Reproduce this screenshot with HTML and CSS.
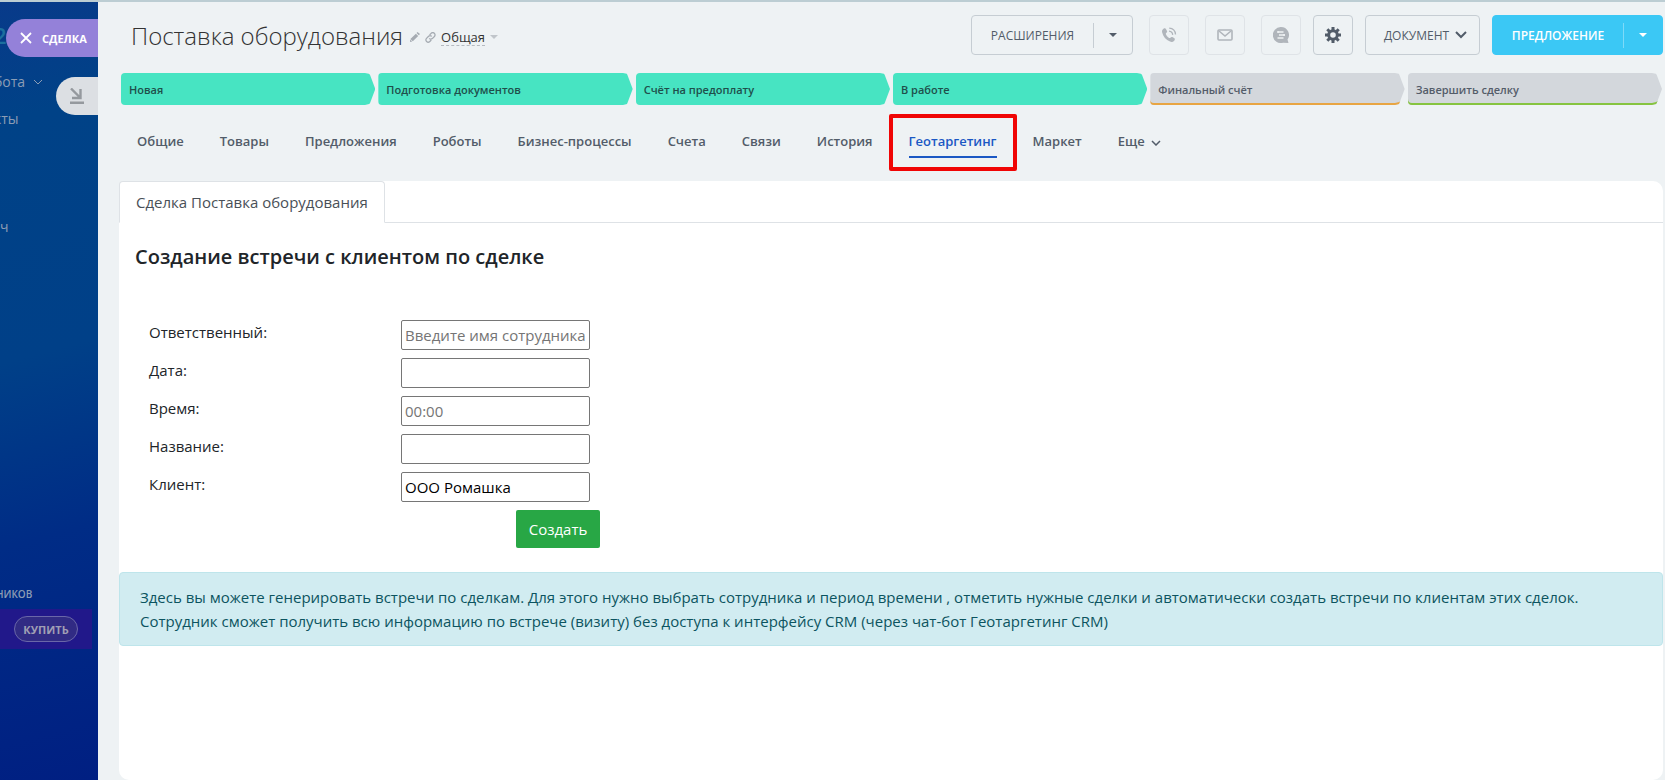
FILE: index.html
```html
<!DOCTYPE html>
<html lang="ru">
<head>
    <meta charset="UTF-8">
    <meta name="viewport" content="width=device-width, initial-scale=1.0">
    <title>Поставка оборудования</title>
    <link rel="stylesheet" href="styles.css">
</head>
<body>
    <aside class="sidebar">
        <div class="logo">24</div>
        <a href="#" class="menu-item">бота
            <svg width="10" height="6" viewBox="0 0 10 6" fill="none" stroke="currentColor"><path d="M1 1l4 4 4-4"/></svg>
        </a>
        <a href="#" class="menu-item">кты</a>
        <a href="#" class="menu-item menu-key">ч</a>
        <div class="promo-title">НИКОВ</div>
        <div class="promo"><button class="buy">КУПИТЬ</button></div>

        <button class="slider-label label-deal">
            <svg width="12" height="12" viewBox="0 0 12 12" fill="none" stroke="#fff" stroke-width="1.800"><path d="M1 1l10 10M11 1L1 11"/></svg>
            СДЕЛКА
        </button>
        <button class="slider-label label-collapse" aria-label="Свернуть">
            <svg width="14" height="16" viewBox="0 0 14 16" fill="none" stroke="#95999e" stroke-width="2.400"><path d="M1 .500l9 9M10.500 1v9H2M0 14.800h14"/></svg>
        </button>
    </aside>

    <main class="page">
        <header class="header">
            <h1>Поставка оборудования</h1>
            <div class="title-tools">
                <svg width="10" height="10" viewBox="0 0 10 10" fill="#a5abb2"><path d="M7.500 0L10 2 8.800 3.300 6.500 1.100zM5.900 1.700l2.300 2.200L2.800 9.200.400 7zM.200 7.600L2.200 9.600 0 10z"/></svg>
                <svg width="11" height="11" viewBox="0 0 11 11" fill="none" stroke="#a5abb2" stroke-width="1.300"><path d="M4.600 3l1.500-1.600c1-1 2.300-.9 3.200-.1s1 2.200.1 3.200L7.300 6.600c-.9.800-2.200.8-3-.2M6.300 8L4.800 9.500c-1 1-2.300.9-3.200.1s-1-2.200-.1-3.200l2.100-2.100c.9-.8 2.200-.8 3 .2"/></svg>
                <a href="#" class="category">Общая</a>
                <svg width="8" height="4" viewBox="0 0 8 4" fill="#c0c5ca"><path d="M0 0h8L4 4z"/></svg>
            </div>
            <div class="actions">
                <div class="btn-group btn-extensions">
                    <button class="btn-main">РАСШИРЕНИЯ</button>
                    <button class="btn-arrow" aria-label="Ещё расширения">
                        <svg width="8" height="4" viewBox="0 0 8 4" fill="currentColor"><path d="M0 0h8L4 4z"/></svg>
                    </button>
                </div>
                <div class="contacts">
                    <button class="btn-icon disabled" aria-label="Позвонить">
                        <svg width="16" height="16" viewBox="0 0 16 16"><path fill="#b0b5bb" d="M2.500 1.800C3.600 1 4.600 1.200 5.200 2.400l.8 1.700c.3.700.1 1.300-.5 1.700-.7.500-.8.900-.5 1.600.7 1.500 1.700 2.700 3.100 3.500.6.300 1 .2 1.500-.4.500-.6 1.100-.7 1.700-.4l1.800 1c.9.500 1 1.400.3 2.300-1.100 1.400-2.600 1.900-4.400 1.200C5 12.900 2 9.500 1.100 5.200.8 3.700 1.300 2.600 2.500 1.800z"/><path d="M8 4.200c2.200.2 3.500 1.500 3.700 3.700M8.200 1.200c3.700.2 6 2.500 6.300 6.300" fill="none" stroke="#b0b5bb" stroke-width="1.300"/></svg>
                    </button>
                    <button class="btn-icon disabled" aria-label="Письмо">
                        <svg width="16" height="12" viewBox="0 0 16 12" fill="none" stroke="#b0b5bb" stroke-width="1.600"><rect x="1" y="1" width="14" height="10" rx="1"/><path d="M2 2l6 5 6-5"/></svg>
                    </button>
                    <button class="btn-icon disabled" aria-label="Чат">
                        <svg width="16" height="16" viewBox="0 0 16 16"><path fill="#b0b5bb" d="M8 0a8 8 0 0 1 6.500 12.600L15.500 16 10 15.700A8 8 0 1 1 8 0z"/><path d="M4.500 5h6M6 8h6M4.500 11h6M5 4v2M11 7v2" stroke="#eef2f4" stroke-width="1.500"/></svg>
                    </button>
                </div>
                <button class="btn-icon" aria-label="Настройки">
                    <svg width="16" height="16" viewBox="0 0 16 16"><g stroke="#525c69" stroke-width="3"><path d="M8 0v3M8 13v3M0 8h3M13 8h3M2.300 2.300l2.200 2.200M11.500 11.500l2.200 2.200M2.300 13.700l2.200-2.200M11.500 4.500l2.200-2.200"/><circle cx="8" cy="8" r="4.300" fill="none"/></g></svg>
                </button>
                <button class="btn-doc">ДОКУМЕНТ
                    <svg width="12" height="8" viewBox="0 0 12 8" fill="none" stroke="currentColor" stroke-width="2"><path d="M1 1l5 5 5-5"/></svg>
                </button>
                <div class="btn-group btn-offer">
                    <button class="btn-main">ПРЕДЛОЖЕНИЕ</button>
                    <button class="btn-arrow" aria-label="Ещё предложения">
                        <svg width="8" height="4" viewBox="0 0 8 4" fill="currentColor"><path d="M0 0h8L4 4z"/></svg>
                    </button>
                </div>
            </div>
        </header>

        <div class="stages">
            <div class="stage done">Новая</div>
            <div class="stage done">Подготовка документов</div>
            <div class="stage done">Счёт на предоплату</div>
            <div class="stage done">В работе</div>
            <div class="stage final-bill">Финальный счёт</div>
            <div class="stage finish">Завершить сделку</div>
        </div>

        <nav class="tabs">
            <a href="#">Общие</a>
            <a href="#">Товары</a>
            <a href="#">Предложения</a>
            <a href="#">Роботы</a>
            <a href="#">Бизнес-процессы</a>
            <a href="#">Счета</a>
            <a href="#">Связи</a>
            <a href="#">История</a>
            <a href="#" class="active">Геотаргетинг</a>
            <a href="#">Маркет</a>
            <a href="#">Еще
                <svg width="10" height="6" viewBox="0 0 10 6" fill="none" stroke="currentColor" stroke-width="1.500"><path d="M1 1l4 4 4-4"/></svg>
            </a>
        </nav>

        <section class="card">
            <div class="card-tabs">
                <a href="#" class="card-tab">Сделка Поставка оборудования</a>
            </div>
            <h2>Создание встречи с клиентом по сделке</h2>
            <form class="meeting-form">
                <label for="responsible">Ответственный:</label>
                <input type="text" id="responsible" placeholder="Введите имя сотрудника">
                <label for="date">Дата:</label>
                <input type="text" id="date">
                <label for="time">Время:</label>
                <input type="text" id="time" placeholder="00:00">
                <label for="name">Название:</label>
                <input type="text" id="name">
                <label for="client">Клиент:</label>
                <input type="text" id="client" value="ООО Ромашка">
                <button type="button" class="create">Создать</button>
            </form>
            <div class="alert">
                Здесь вы можете генерировать встречи по сделкам. Для этого нужно выбрать сотрудника и период времени , отметить нужные сделки и автоматически создать встречи по клиентам этих сделок.<br>
                Сотрудник сможет получить всю информацию по встрече (визиту) без доступа к интерфейсу CRM (через чат-бот Геотаргетинг CRM)
            </div>
        </section>
    </main>
</body>
</html>
```
FILE: styles.css
```css
* {
    box-sizing: border-box;
}
body {
    margin: 0;
    min-height: 100vh;
    display: flex;
    border-top: 2px solid #bccdd3;
    background: #eef2f4;
    color: #212529;
    font-family: "Open Sans", "Noto Sans", sans-serif;
    font-size: 15px;
}
a {
    color: inherit;
    text-decoration: none;
}
button {
    font-family: inherit;
    cursor: pointer;
}

/* dimmed portal menu under the slider */
.sidebar {
    position: relative;
    flex: 0 0 98px;
    display: flex;
    flex-direction: column;
    align-items: flex-start;
    overflow: hidden;
    background: linear-gradient(165deg, #083a8a 0%, #004287 15%, #004088 45%, #002c86 68%, #001f82 100%);
    color: #8c9db5;
}
.logo {
    height: 61px;
    margin-left: -6px;
    padding-top: 18px;
    color: #1c6f9e;
    font-size: 22px;
    font-weight: 600;
}
.menu-item {
    display: flex;
    align-items: center;
    gap: 8px;
    height: 37px;
    margin-left: -6px;
    font-size: 14px;
}
.menu-key {
    margin: 71px 0 0;
}
.promo-title {
    height: 29px;
    margin: 335px 0 0 -4px;
    font-size: 10px;
    font-weight: 600;
    line-height: 29px;
}
.promo {
    width: 92px;
    padding: 7px 14px;
    background: #21188a;
}
.buy {
    display: block;
    width: 64px;
    height: 26px;
    padding: 0;
    border: 1px solid #6a67a8;
    border-radius: 13px;
    background: #312b84;
    color: #a09fb4;
    font-size: 11px;
    font-weight: 700;
}
.slider-label {
    position: absolute;
    right: 0;
    display: flex;
    align-items: center;
    height: 38px;
    border: none;
    border-radius: 19px 0 0 19px;
}
.label-deal {
    top: 17px;
    width: 92px;
    gap: 10px;
    padding: 0 0 0 14px;
    background: #9481d9;
    color: #fff;
    font-size: 11px;
    font-weight: 700;
}
.label-collapse {
    top: 75px;
    width: 42px;
    padding: 0 0 0 14px;
    background: #dcdfe3;
}

.page {
    flex: 1;
    min-width: 0;
    display: flex;
    flex-direction: column;
    padding: 13px 2px 0 21px;
}
.header {
    display: flex;
    align-items: center;
    height: 40px;
    padding-left: 12px;
}
h1 {
    margin: 0;
    color: #333;
    font-size: 24px;
    font-weight: 300;
}
.title-tools {
    display: flex;
    align-items: center;
    gap: 5px;
    padding: 4px 0 0 7px;
}
.category {
    border-bottom: 1px dashed #b5bac0;
    color: #333;
    font-size: 13px;
    line-height: 16px;
}
.actions {
    display: flex;
    gap: 12px;
    margin-left: auto;
}
.actions button {
    color: #525c69;
    font-size: 12px;
}
.contacts {
    display: flex;
    gap: 16px;
    margin-left: 4px;
}
.btn-group, .btn-icon, .btn-doc {
    display: flex;
    align-items: center;
    justify-content: center;
    height: 40px;
    border: 1px solid #c6cdd3;
    border-radius: 4px;
    background: none;
}
.btn-group button {
    border: none;
    background: none;
}
.btn-group .btn-main {
    flex: 1;
    padding: 0;
}
.btn-group .btn-arrow {
    display: flex;
    align-items: center;
    justify-content: center;
    width: 39px;
    height: 25px;
    border-left: 1px solid #c6cdd3;
}
.btn-extensions {
    width: 162px;
}
.btn-icon {
    width: 40px;
    padding: 0;
}
.btn-icon.disabled {
    border-color: #dfe3e7;
}
.btn-doc {
    gap: 6px;
    width: 115px;
    padding: 0 0 0 6px;
}
.btn-offer {
    width: 171px;
    border-color: #3bc8f5;
    background: #3bc8f5;
}
.actions .btn-offer button {
    border-color: #7edaf8;
    color: #fff;
    font-weight: 600;
}

.stages {
    display: grid;
    grid-template-columns: repeat(6, 1fr);
    gap: 3px;
    margin: 18px 1px 0 2px;
}
.stage {
    height: 32px;
    padding-left: 8px;
    border-radius: 4px 10px 10px 4px;
    background: #d3d7dc;
    clip-path: polygon(0 0, calc(100% - 6px) 0, 100% 50%, calc(100% - 6px) 100%, 0 100%);
    color: #535c69;
    font-size: 11px;
    font-weight: 600;
    line-height: 33px;
}
.stage.done {
    background: #47e4c2;
    color: #1f4f4b;
}
.final-bill {
    box-shadow: inset 0 -2px #e8a542;
}
.finish {
    box-shadow: inset 0 -2px #86c440;
}

.tabs {
    display: flex;
    gap: 36px;
    height: 76px;
    padding: 24px 0 0 18px;
    color: #525c69;
    font-size: 13px;
    font-weight: 600;
    line-height: 24px;
}
.tabs a {
    position: relative;
    height: 29px;
    white-space: nowrap;
}
.tabs svg {
    margin-left: 3px;
}
.tabs .active {
    border-bottom: 2px solid #1b58c4;
    color: #1b58c4;
}
/* red frame around the current tab */
.tabs .active::after {
    content: "";
    position: absolute;
    inset: -15px -20px;
    border: 4px solid #f00505;
    border-radius: 2px;
}

.card {
    flex: 1;
    border-radius: 10px;
    background: #fff;
}
.card-tabs {
    display: flex;
    height: 42px;
    border-bottom: 1px solid #dee2e6;
}
.card-tab {
    height: 42px;
    padding: 0 16px;
    border: 1px solid #dee2e6;
    border-bottom-color: #fff;
    border-radius: 4px 4px 0 0;
    background: #fff;
    color: #495057;
    line-height: 40px;
}
h2 {
    margin: 19px 16px 0;
    font-size: 20px;
    font-weight: 600;
    line-height: 30px;
}
.meeting-form {
    display: grid;
    grid-template-columns: 252px 189px 10px;
    row-gap: 8px;
    margin: 48px 0 24px 30px;
}
.meeting-form label {
    grid-column: 1;
    line-height: 25px;
}
.meeting-form input {
    height: 30px;
    padding: 1px 3px;
    border: 1px solid #767676;
    border-radius: 2px;
    font-family: inherit;
    font-size: 15px;
}
.meeting-form input::placeholder {
    color: #757575;
}
.create {
    grid-column: 1 / -1;
    justify-self: end;
    width: 84px;
    height: 38px;
    padding: 0;
    border: none;
    border-radius: 2px;
    background: #28a745;
    color: #fff;
    font-size: 15px;
}
.alert {
    padding: 12px 20px;
    border: 1px solid #bee5eb;
    border-radius: 4px;
    background: #d1ecf1;
    color: #0c5460;
    line-height: 24px;
}
```
